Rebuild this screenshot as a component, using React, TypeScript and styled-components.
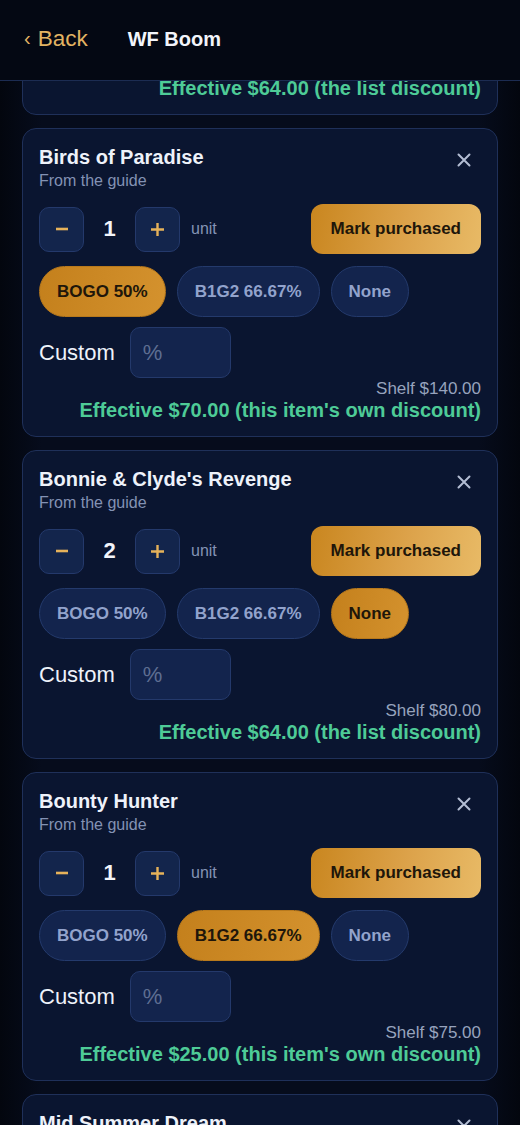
import React, { useLayoutEffect, useRef, useState } from "react";
import styled, { createGlobalStyle, css } from "styled-components";

type Deal = "bogo" | "b1g2" | "none";

interface Item {
  name: string;
  qty: number;
  deal: Deal;
  shelf: string;
  effective: string;
  own: boolean;
}

const ITEMS: Item[] = [
  { name: "Black Cherry Soda", qty: 2, deal: "none", shelf: "$80.00", effective: "$64.00", own: false },
  { name: "Birds of Paradise", qty: 1, deal: "bogo", shelf: "$140.00", effective: "$70.00", own: true },
  { name: "Bonnie & Clyde's Revenge", qty: 2, deal: "none", shelf: "$80.00", effective: "$64.00", own: false },
  { name: "Bounty Hunter", qty: 1, deal: "b1g2", shelf: "$75.00", effective: "$25.00", own: true },
  { name: "Mid Summer Dream", qty: 1, deal: "none", shelf: "$90.00", effective: "$72.00", own: false },
];

const DEALS: { key: Deal; label: string }[] = [
  { key: "bogo", label: "BOGO 50%" },
  { key: "b1g2", label: "B1G2 66.67%" },
  { key: "none", label: "None" },
];

const GlobalStyle = createGlobalStyle`
  html, body {
    margin: 0;
    padding: 0;
    background: #050915;
  }
  body {
    font-family: "Liberation Sans", Arial, sans-serif;
    -webkit-font-smoothing: antialiased;
  }
  * { box-sizing: border-box; }
`;

const Screen = styled.div`
  height: 100vh;
  display: flex;
  flex-direction: column;
  background: linear-gradient(90deg, #03060e 0%, #060c1c 8%, #060c1c 92%, #03060e 100%);
  overflow: hidden;
`;

const TopBar = styled.header`
  flex: none;
  height: 81px;
  display: flex;
  align-items: center;
  padding: 0 24px 2px;
  gap: 40px;
  background: #040813;
  border-bottom: 1px solid #1c2c52;
`;

const BackLink = styled.button`
  display: flex;
  align-items: center;
  gap: 7px;
  padding: 0;
  border: 0;
  background: none;
  color: #e3b463;
  font-family: inherit;
  font-size: 22.5px;
  cursor: pointer;
`;

const Chevron = styled.span`
  font-size: 20px;
  margin-top: -2px;
`;

const PageTitle = styled.h1`
  margin: 0;
  color: #f2f4fa;
  font-size: 20px;
  font-weight: 700;
`;

const ScrollArea = styled.div`
  flex: 1;
  overflow: hidden;
`;

const List = styled.div`
  display: flex;
  flex-direction: column;
  gap: 13px;
  padding: 12px 22px 40px;
`;

const Card = styled.section`
  display: flex;
  flex-direction: column;
  padding: 15px 16px 15px;
  border: 1px solid #1f3059;
  border-radius: 14px;
  background: #0a1530;
`;

const CardHead = styled.div`
  display: flex;
  justify-content: space-between;
  align-items: flex-start;
`;

const Name = styled.h2`
  margin: 0;
  color: #eef2fa;
  font-size: 20px;
  font-weight: 700;
  line-height: 26px;
`;

const Source = styled.div`
  color: #8392b4;
  font-size: 16px;
  line-height: 22px;
`;

const CloseButton = styled.button`
  width: 26px;
  height: 26px;
  margin: 3px 4px 0 0;
  padding: 0;
  border: 0;
  background: none;
  display: flex;
  align-items: center;
  justify-content: center;
  color: #b3bdd3;
  cursor: pointer;
`;

const QtyRow = styled.div`
  display: flex;
  align-items: center;
  margin-top: 12px;
`;

const StepButton = styled.button`
  width: 45px;
  height: 45px;
  border-radius: 10px;
  border: 1px solid #24396b;
  background: #13254c;
  color: #e6b25a;
  display: flex;
  align-items: center;
  justify-content: center;
  padding: 0;
  cursor: pointer;
`;

const Qty = styled.span`
  width: 51px;
  text-align: center;
  color: #f2f4fa;
  font-size: 22px;
  font-weight: 700;
`;

const Unit = styled.span`
  margin-left: 11px;
  color: #8493b5;
  font-size: 16px;
`;

const goldFill = css`
  background: linear-gradient(100deg, #c9861f 0%, #dca24a 55%, #e8ba66 100%);
  color: #20160a;
`;

const PurchaseButton = styled.button`
  margin-left: auto;
  height: 50px;
  padding: 0 20px;
  border: 0;
  border-radius: 12px;
  ${goldFill};
  font-family: inherit;
  font-size: 17px;
  font-weight: 700;
  cursor: pointer;
`;

const Chips = styled.div`
  display: flex;
  gap: 11px;
  margin-top: 12px;
`;

const Chip = styled.button<{ $active: boolean }>`
  height: 51px;
  padding: 0 17px;
  border-radius: 26px;
  font-family: inherit;
  font-size: 17px;
  font-weight: 700;
  cursor: pointer;
  ${({ $active }) =>
    $active
      ? css`
          ${goldFill};
          background: linear-gradient(100deg, #c4801c 0%, #d4922e 100%);
          border: 1px solid #b8791c;
        `
      : css`
          background: #13244d;
          border: 1px solid #243a6c;
          color: #92a3cc;
        `}
`;

const CustomRow = styled.label`
  display: flex;
  align-items: center;
  gap: 15px;
  margin-top: 10px;
  color: #eef2fa;
  font-size: 22px;
`;

const PercentInput = styled.input`
  width: 101px;
  height: 51px;
  padding: 0 12px;
  border-radius: 10px;
  border: 1px solid #24396b;
  background: #13244d;
  color: #eef2fa;
  font-family: inherit;
  font-size: 22px;
  outline: none;
  &::placeholder {
    color: #5e6e92;
  }
`;

const Totals = styled.div`
  display: flex;
  flex-direction: column;
  align-items: flex-end;
  margin-top: 1px;
`;

const Shelf = styled.div`
  color: #97a3bd;
  font-size: 17px;
  line-height: 20px;
`;

const Effective = styled.div`
  color: #4ecb97;
  font-size: 20px;
  font-weight: 700;
  line-height: 22px;
`;

function CloseIcon() {
  return (
    <svg width="14" height="14" viewBox="0 0 14 14">
      <path d="M1.5 1.5 L12.5 12.5 M12.5 1.5 L1.5 12.5" stroke="currentColor" strokeWidth="2" strokeLinecap="round" />
    </svg>
  );
}

function MinusIcon() {
  return (
    <svg width="14" height="14" viewBox="0 0 14 14">
      <path d="M1 7 H13" stroke="currentColor" strokeWidth="2.6" />
    </svg>
  );
}

function PlusIcon() {
  return (
    <svg width="15" height="15" viewBox="0 0 15 15">
      <path d="M1 7.5 H14 M7.5 1 V14" stroke="currentColor" strokeWidth="2.4" />
    </svg>
  );
}

function ItemCard({ item, innerRef }: { item: Item; innerRef?: React.Ref<HTMLElement> }) {
  const [qty, setQty] = useState(item.qty);
  const [deal, setDeal] = useState<Deal>(item.deal);

  return (
    <Card ref={innerRef}>
      <CardHead>
        <div>
          <Name>{item.name}</Name>
          <Source>From the guide</Source>
        </div>
        <CloseButton aria-label="Remove">
          <CloseIcon />
        </CloseButton>
      </CardHead>
      <QtyRow>
        <StepButton onClick={() => setQty((q) => Math.max(1, q - 1))}>
          <MinusIcon />
        </StepButton>
        <Qty>{qty}</Qty>
        <StepButton onClick={() => setQty((q) => q + 1)}>
          <PlusIcon />
        </StepButton>
        <Unit>unit</Unit>
        <PurchaseButton>Mark purchased</PurchaseButton>
      </QtyRow>
      <Chips>
        {DEALS.map((d) => (
          <Chip key={d.key} $active={deal === d.key} onClick={() => setDeal(d.key)}>
            {d.label}
          </Chip>
        ))}
      </Chips>
      <CustomRow>
        Custom
        <PercentInput placeholder="%" />
      </CustomRow>
      <Totals>
        <Shelf>Shelf {item.shelf}</Shelf>
        <Effective>
          Effective {item.effective} ({item.own ? "this item's own discount" : "the list discount"})
        </Effective>
      </Totals>
    </Card>
  );
}

export default function App() {
  const scrollRef = useRef<HTMLDivElement>(null);
  const firstRef = useRef<HTMLElement>(null);

  // start the list scrolled so only the tail of the first card shows
  useLayoutEffect(() => {
    const area = scrollRef.current;
    const first = firstRef.current;
    if (area && first) {
      area.scrollTop = first.offsetTop - area.offsetTop + first.offsetHeight - 34;
    }
  }, []);

  return (
    <>
      <GlobalStyle />
      <Screen>
        <TopBar>
          <BackLink>
            <Chevron>‹</Chevron>Back
          </BackLink>
          <PageTitle>WF Boom</PageTitle>
        </TopBar>
        <ScrollArea ref={scrollRef}>
          <List>
            {ITEMS.map((item, i) => (
              <ItemCard key={item.name} item={item} innerRef={i === 0 ? firstRef : undefined} />
            ))}
          </List>
        </ScrollArea>
      </Screen>
    </>
  );
}
